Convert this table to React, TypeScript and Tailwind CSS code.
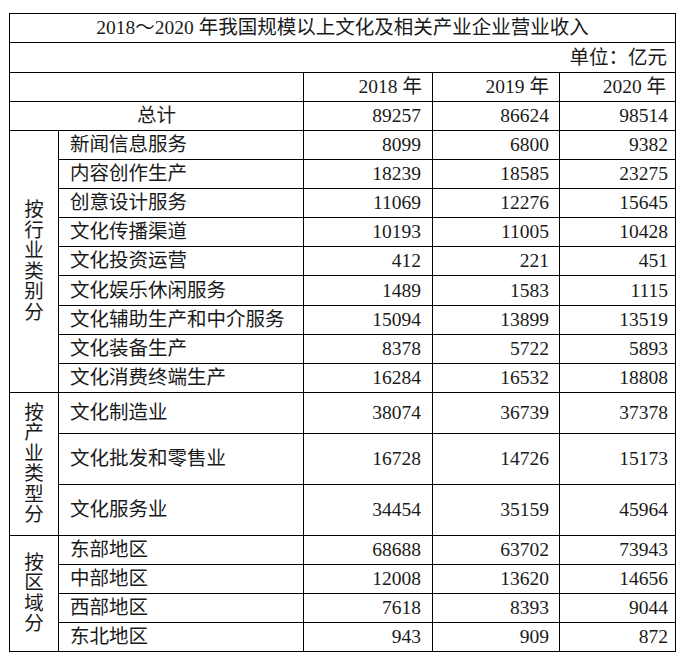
import React from "react";

const font = { fontFamily: '"Liberation Serif", "Noto Sans CJK SC", serif' };

type Row = { name: string; v: [string, string, string]; h: string };

const g1: Row[] = [
  { name: "新闻信息服务", v: ["8099", "6800", "9382"], h: "h-[29px]" },
  { name: "内容创作生产", v: ["18239", "18585", "23275"], h: "h-[29px]" },
  { name: "创意设计服务", v: ["11069", "12276", "15645"], h: "h-[29px]" },
  { name: "文化传播渠道", v: ["10193", "11005", "10428"], h: "h-[29px]" },
  { name: "文化投资运营", v: ["412", "221", "451"], h: "h-[29px]" },
  { name: "文化娱乐休闲服务", v: ["1489", "1583", "1115"], h: "h-[30px]" },
  { name: "文化辅助生产和中介服务", v: ["15094", "13899", "13519"], h: "h-[29px]" },
  { name: "文化装备生产", v: ["8378", "5722", "5893"], h: "h-[29px]" },
  { name: "文化消费终端生产", v: ["16284", "16532", "18808"], h: "h-[29px]" },
];
const g2: Row[] = [
  { name: "文化制造业", v: ["38074", "36739", "37378"], h: "h-[41px]" },
  { name: "文化批发和零售业", v: ["16728", "14726", "15173"], h: "h-[51px]" },
  { name: "文化服务业", v: ["34454", "35159", "45964"], h: "h-[51px]" },
];
const g3: Row[] = [
  { name: "东部地区", v: ["68688", "63702", "73943"], h: "h-[29px]" },
  { name: "中部地区", v: ["12008", "13620", "14656"], h: "h-[29px]" },
  { name: "西部地区", v: ["7618", "8393", "9044"], h: "h-[29px]" },
  { name: "东北地区", v: ["943", "909", "872"], h: "h-[29px]" },
];

const cell = "border border-black p-0 align-middle";

function Group({ label, rows }: { label: string; rows: Row[] }) {
  return (
    <>
      {rows.map((r, i) => (
        <tr key={r.name} className={r.h}>
          {i === 0 && (
            <td rowSpan={rows.length} className={`${cell} text-center leading-[20.5px]`}>
              <div className="flex flex-col items-center">
                {label.split("").map((c, k) => (
                  <span key={k}>{c}</span>
                ))}
              </div>
            </td>
          )}
          <td className={`${cell} pl-[11px] text-left`}>{r.name}</td>
          <td className={`${cell} pr-[11px] text-right`}>{r.v[0]}</td>
          <td className={`${cell} pr-[10px] text-right`}>{r.v[1]}</td>
          <td className={`${cell} pr-[7px] text-right`}>{r.v[2]}</td>
        </tr>
      ))}
    </>
  );
}

export default function App() {
  return (
    <div className="w-[689px] h-[661px] bg-white pt-[13px] pl-[9px]" style={font}>
      <table className="border-collapse table-fixed text-[19.5px] text-[#1a1a1a] leading-none w-[666px]">
        <colgroup>
          <col className="w-[49px]" />
          <col className="w-[245px]" />
          <col className="w-[129px]" />
          <col className="w-[127px]" />
          <col className="w-[116px]" />
        </colgroup>
        <tbody>
          <tr className="h-[29px]">
            <td colSpan={5} className={`${cell} text-center`}>
              2018～2020 年我国规模以上文化及相关产业企业营业收入
            </td>
          </tr>
          <tr className="h-[30px]">
            <td colSpan={5} className={`${cell} text-right pr-[8px]`}>
              单位：亿元
            </td>
          </tr>
          <tr className="h-[29px]">
            <td colSpan={2} className={cell}></td>
            <td className={`${cell} pr-[10px] text-right`}>2018 年</td>
            <td className={`${cell} pr-[10px] text-right`}>2019 年</td>
            <td className={`${cell} pr-[9px] text-right`}>2020 年</td>
          </tr>
          <tr className="h-[29px]">
            <td colSpan={2} className={`${cell} text-center`}>总计</td>
            <td className={`${cell} pr-[11px] text-right`}>89257</td>
            <td className={`${cell} pr-[10px] text-right`}>86624</td>
            <td className={`${cell} pr-[7px] text-right`}>98514</td>
          </tr>
          <Group label="按行业类别分" rows={g1} />
          <Group label="按产业类型分" rows={g2} />
          <Group label="按区域分" rows={g3} />
        </tbody>
      </table>
    </div>
  );
}
